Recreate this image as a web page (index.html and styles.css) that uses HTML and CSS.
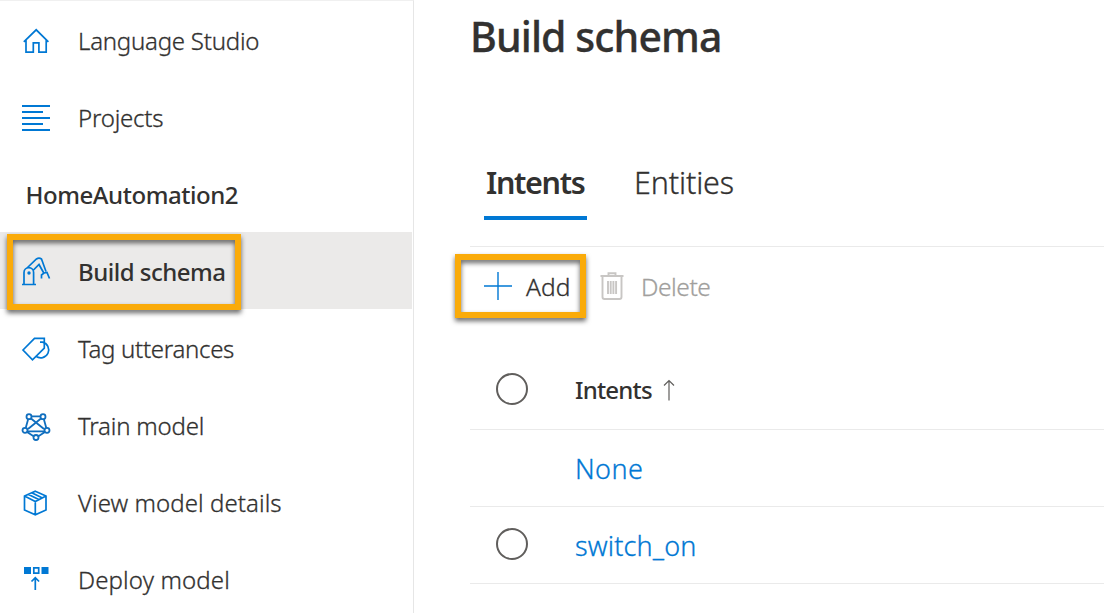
FILE: index.html
```html
<!DOCTYPE html>
<html lang="en">
<head>
<meta charset="utf-8">
<title>Language Studio</title>
<link rel="stylesheet" href="styles.css">
</head>
<body>
<div class="app">
  <nav class="sidebar">
    <a class="item"><svg class="icon" viewBox="0 0 32 32"><path d="M3.800 16.800 16.200 4.800l12.200 12M6 15v12.200h7.300v-9.400h5.600v9.400h7.300V15"/></svg><span class="nav-home">Language Studio</span></a>
    <a class="item"><svg class="icon" viewBox="0 0 32 32"><path class="solid" d="M2 3h28v2H2zM2 9h21v2H2zM2 15h28v2H2zM2 21h21v2H2zM2 27h28v2H2z"/></svg><span class="nav-projects">Projects</span></a>
    <div class="item heading"><span>HomeAutomation2</span></div>
    <a class="item selected"><svg class="icon" viewBox="0 0 32 32"><path d="M2 28.500h14M4 28V16.500a4.800 4.800 0 0 1 9.600 0V28M7 12l9.500-9q2.500-1.800 5 0l4.500 12.500M13 14.500l6-6 4.500 8M21.500 22.500v-3.500l2.500-2 3-.5 2.500 6"/><circle class="solid" cx="9" cy="17" r="1.700"/></svg><span>Build schema</span><i class="callout"></i></a>
    <a class="item"><svg class="icon" viewBox="0 0 32 32"><path d="M3 17 14.500 5.300H24.300v9.900L12.500 26.800zM20 9.200h2.500a7.900 7.900 0 1 1-6.500 14"/></svg><span class="nav-tag">Tag utterances</span></a>
    <a class="item"><svg class="icon net" viewBox="0 0 32 32"><path d="M11.500 6.300h9M8.200 9 5.700 18M23.800 9l2.500 9M11 8.500l13 10.500M21 8.500l-13 10.500M7.500 21.300h17M7 22l7 4.500M25 22l-7 4.500"/><circle cx="9" cy="6.700" r="2.500"/><circle cx="23" cy="6.700" r="2.500"/><circle cx="5" cy="20.300" r="2.500"/><circle cx="27" cy="20.300" r="2.500"/><circle cx="16" cy="27.500" r="2.500"/></svg><span class="nav-train">Train model</span></a>
    <a class="item"><svg class="icon" viewBox="0 0 32 32"><path d="M15.300 4.200 26 9v14L15.300 27.700 4.500 23V9zM4.500 9l10.800 5.500L26 9M15.300 14.500v13M8 7.300l10.800 5.300M11.700 5.700l10.800 5.200"/></svg><span class="nav-view">View model details</span></a>
    <a class="item"><svg class="icon" viewBox="0 0 32 32"><path class="solid" d="M4 3h7v7H4zM21.500 3h7v7h-7z"/><path d="M13.800 3.900h4.900v5.200h-4.900zM15.300 26V14M11.500 17.500l3.800-3.800 3.800 3.800"/></svg><span class="nav-deploy">Deploy model</span></a>
  </nav>
  <main class="main">
    <h1 class="title">Build schema</h1>
    <div class="tabs"><div class="tab active">Intents</div><div class="tab">Entities</div></div>
    <div class="toolbar">
      <button class="cmd add"><svg class="icon" viewBox="0 0 32 32"><path d="M2 16h28M16 2v28"/></svg><span>Add</span><i class="callout"></i></button>
      <button class="cmd del"><svg class="icon" viewBox="0 0 32 32"><path d="M4.500 6h23M12.500 6V3.300h7V6M6.500 6v21q0 2 2 2h15q2 0 2-2V6M12 11v13M14.700 11v13M17.400 11v13M20.100 11v13"/></svg><span>Delete</span></button>
    </div>
    <div class="row head"><i class="radio"></i><span>Intents</span><svg class="sort" viewBox="0 0 12 22"><path d="M6 21.500V1.500M1 6.500l5-5 5 5"/></svg></div>
    <div class="row link"><span class="indent">None</span></div>
    <div class="row link"><i class="radio"></i><span class="name">switch_on</span></div>
  </main>
</div>
</body>
</html>
```
FILE: styles.css
```css
* { box-sizing: border-box; }
body { margin: 0; background: #fff; color: #323130; font-family: "Noto Sans", "Open Sans", sans-serif; font-weight: 300; overflow: hidden; -webkit-text-stroke: .3px currentColor; }
.app { display: flex; height: 613px; overflow: hidden; }
.sidebar { width: 414px; flex: none; border-top: 1px solid #f0f0f0; border-right: 1px solid #e6e6e6; padding-right: 1px; }
.item { position: relative; display: flex; align-items: center; height: 77px; padding: 2px 0 0 20px; gap: 26px; font-size: 24px; line-height: 34px; white-space: nowrap; }
.nav-home { letter-spacing: -.23px; }
.nav-projects { letter-spacing: -.2px; }
.nav-tag { letter-spacing: -.3px; }
.nav-train { letter-spacing: -.2px; }
.nav-view { letter-spacing: .07px; }
.nav-deploy { letter-spacing: .14px; }
.heading { padding-left: 25.500px; font-weight: 500; letter-spacing: -.45px; -webkit-text-stroke: 0; }
.selected { background: #ebeae9; font-weight: 500; letter-spacing: -.5px; -webkit-text-stroke: 0; }
.icon { width: 32px; height: 32px; flex: none; fill: none; stroke: #0078d4; stroke-width: 1.700; }
.icon .solid { fill: #0078d4; stroke: none; }
.net { stroke: #106ebe; stroke-width: 1.800; }
.net circle { fill: #fff; }
.callout { position: absolute; border: 6px solid #faab0a; filter: drop-shadow(0 3px 2.500px rgba(0,0,0,.6)); }
.selected .callout { left: 7px; top: 2px; width: 234px; height: 76px; z-index: 1; }
.main { flex: 1; padding-left: 56px; min-width: 0; }
.title { margin: 0; height: 120px; padding-top: 7px; font-size: 41px; line-height: 58px; font-weight: 500; letter-spacing: -.9px; }
.tabs { display: flex; gap: 45px; height: 127px; padding: 26px 0 0 14px; border-bottom: 1px solid #eaeaea; }
.tab { height: 74px; padding: 0 2px; font-size: 30.500px; line-height: 72px; white-space: nowrap; letter-spacing: -.15px; }
.active { font-weight: 600; width: 103px; border-bottom: 4px solid #0078d4; letter-spacing: -1.35px; -webkit-text-stroke: 0; }
.toolbar { display: flex; height: 103px; padding: 7px 0 32px 0; }
.cmd { position: relative; display: flex; align-items: center; height: 64px; padding: 0; border: 0; background: none; color: #323130; font: 300 24.500px/34px "Noto Sans", sans-serif; letter-spacing: .1px; }
.cmd span { padding-top: 2px; -webkit-text-stroke: .3px currentColor; }
.add { padding-left: 12px; width: 114px; gap: 12px; }
.add .icon { stroke-width: 1.400; }
.add .callout { left: -15px; top: 0; width: 131px; height: 64px; }
.del { padding-left: 12px; gap: 13px; color: #a19f9d; letter-spacing: -.45px; }
.del .icon { stroke: #c8c6c4; stroke-width: 1.900; }
.row { display: flex; align-items: center; height: 77px; padding: 0 0 2px 26px; border-bottom: 1px solid #eaeaea; }
.row span { padding-top: 2px; }
.head { height: 80px; font-weight: 500; font-size: 24px; letter-spacing: -.8px; -webkit-text-stroke: 0; }
.radio { width: 32px; height: 32px; margin-right: 47px; border: 2px solid #605e5c; border-radius: 50%; }
.sort { width: 12px; height: 22px; margin: 3px 0 0 11px; fill: none; stroke: #605e5c; stroke-width: 1.200; }
.link { color: #0078d4; font-size: 27px; letter-spacing: .4px; }
.indent { margin-left: 79px; }
.name { letter-spacing: .15px; }
```
